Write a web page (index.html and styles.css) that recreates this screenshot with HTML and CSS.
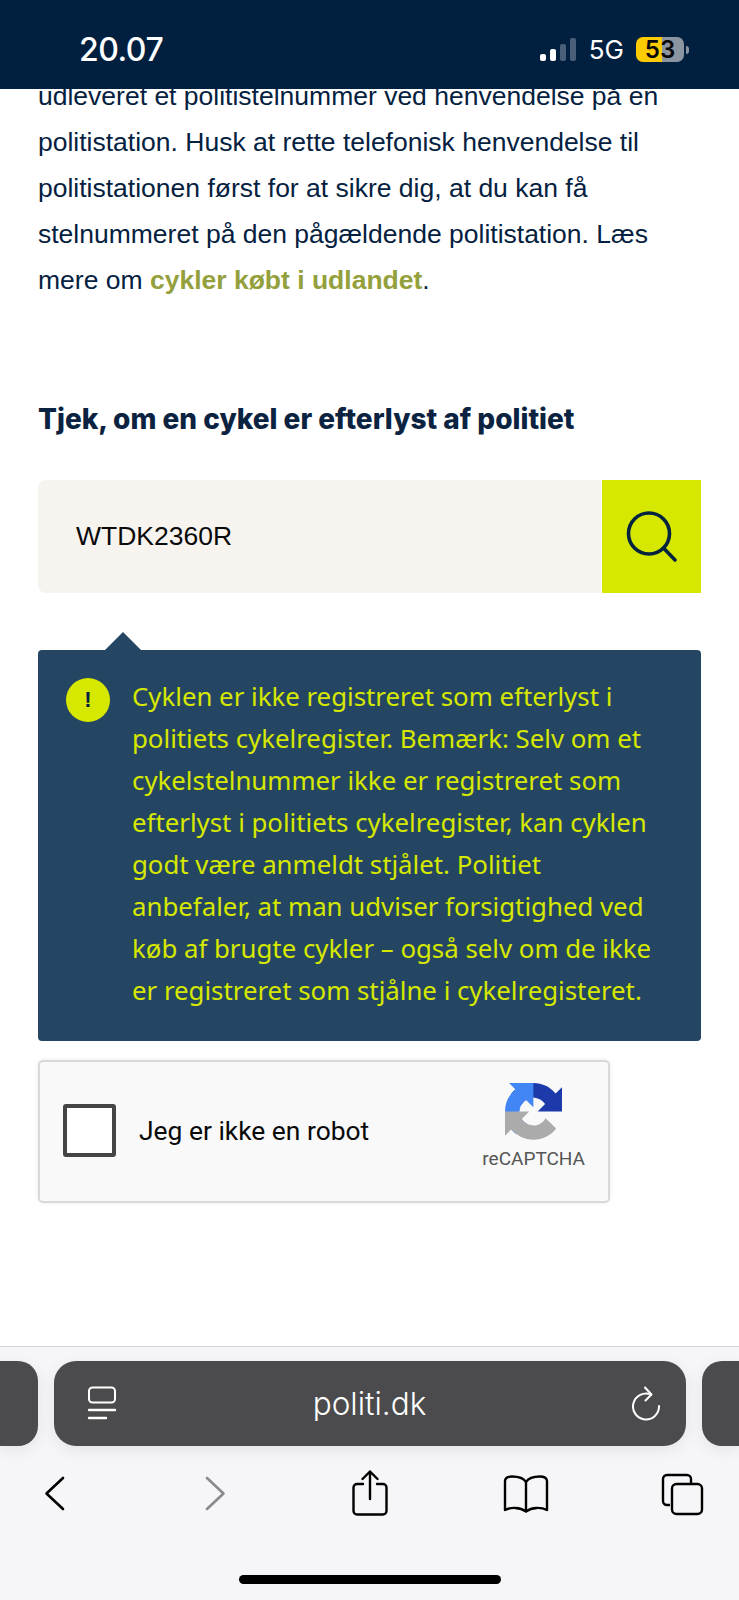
FILE: index.html
```html
<!DOCTYPE html>
<html lang="da">
<head>
    <meta charset="UTF-8">
    <title>Tjek cykel - politi.dk</title>
    <link rel="stylesheet" href="styles.css">
</head>
<body>
    <div class="status-bar">
        <div class="status-time">20.07</div>
        <div class="status-right">
            <div class="signal">
                <span class="bar bar-1"></span>
                <span class="bar bar-2"></span>
                <span class="bar bar-3"></span>
                <span class="bar bar-4"></span>
            </div>
            <div class="network">5G</div>
            <div class="battery"><span class="battery-level">53</span></div>
            <span class="battery-nub"></span>
        </div>
    </div>

    <main class="content">
        <p class="intro">udleveret et politistelnummer ved henvendelse på en politistation. Husk at rette telefonisk henvendelse til politistationen først for at sikre dig, at du kan få stelnummeret på den pågældende politistation. Læs mere om <a class="intro-link" href="#">cykler købt i udlandet</a>.</p>

        <h2 class="search-title">Tjek, om en cykel er efterlyst af politiet</h2>

        <div class="search-form">
            <div class="search-input">WTDK2360R</div>
            <div class="search-button">
                <svg width="56" height="56" viewBox="0 0 56 56" fill="none" stroke="#04233f" stroke-width="3.6" stroke-linecap="round">
                    <ellipse cx="25" cy="24.5" rx="20.5" ry="20.5"/>
                    <line x1="39.5" y1="39" x2="51" y2="51"/>
                </svg>
            </div>
        </div>

        <div class="result">
            <span class="result-arrow"></span>
            <div class="result-icon">!</div>
            <p class="result-text">Cyklen er ikke registreret som efterlyst i politiets cykelregister. Bemærk: Selv om et cykelstelnummer ikke er registreret som efterlyst i politiets cykelregister, kan cyklen godt være anmeldt stjålet. Politiet anbefaler, at man udviser forsigtighed ved køb af brugte cykler – også selv om de ikke er registreret som stjålne i cykelregisteret.</p>
        </div>

        <div class="captcha">
            <span class="captcha-box"></span>
            <span class="captcha-label">Jeg er ikke en robot</span>
            <div class="captcha-brand">
                <svg width="57" height="57" viewBox="0 0 64 64">
                    <path d="M64 31.955l-.033-1.37V4.687l-7.16 7.16C50.948 4.674 42.033.093 32.05.093c-10.4 0-19.622 4.96-25.458 12.64l11.736 11.86a15.55 15.55 0 0 1 4.754-5.334c2.05-1.6 4.952-2.906 8.968-2.906.485 0 .86.057 1.135.163 4.976.393 9.288 3.14 11.828 7.124l-8.307 8.307 26.2 0" fill="#1c3aa9"/>
                    <path d="M31.862.002l-1.37.033H4.594l7.16 7.16C4.58 13.054 0 21.97 0 31.953c0 10.4 4.96 19.622 12.64 25.458l11.86-11.736a15.55 15.55 0 0 1-5.334-4.754c-1.6-2.05-2.906-4.952-2.906-8.968 0-.485.057-.86.163-1.135.393-4.976 3.14-9.288 7.124-11.828l8.307 8.307V.002" fill="#4285f4"/>
                    <path d="M.001 31.953l.033 1.37v25.898l7.16-7.16c5.86 7.173 14.775 11.754 24.76 11.754 10.4 0 19.622-4.96 25.458-12.64l-11.86-11.736a15.55 15.55 0 0 1-4.754 5.334c-2.05 1.6-4.952 2.906-8.968 2.906-.485 0-.86-.057-1.135-.163-4.976-.393-9.288-3.14-11.828-7.124l8.307-8.307L0 31.953" fill="#ababab"/>
                </svg>
                <span class="captcha-name">reCAPTCHA</span>
            </div>
        </div>
    </main>

    <div class="browser-bar">
        <div class="tab-row">
            <div class="tab-stub"></div>
            <div class="address-pill">
                <svg class="pill-icon" width="30" height="36" viewBox="0 0 30 36" fill="none" stroke="#fff" stroke-linecap="round">
                    <rect x="2" y="1.5" width="26" height="15" rx="3.5" stroke-width="2"/>
                    <line x1="2" y1="24" x2="28" y2="24" stroke-width="2.4"/>
                    <line x1="2" y1="32" x2="19" y2="32" stroke-width="2.4"/>
                </svg>
                <span class="address-text">politi.dk</span>
                <svg class="pill-icon" width="30" height="36" viewBox="0 0 30 36" fill="none" stroke="#fff" stroke-width="2" stroke-linecap="round" stroke-linejoin="round">
                    <path d="M20 8.5 A13 13 0 1 0 28 20"/>
                    <path d="M14 1.5 L20.5 8.5 L14.5 14.5"/>
                </svg>
            </div>
            <div class="tab-stub"></div>
        </div>
        <div class="toolbar">
            <svg class="tool tool-back" width="21" height="35" viewBox="0 0 21 35" fill="none" stroke="#000" stroke-width="2.6" stroke-linecap="round" stroke-linejoin="round">
                <path d="M19 2 L2.5 17.5 L19 33"/>
            </svg>
            <svg class="tool tool-forward" width="21" height="35" viewBox="0 0 21 35" fill="none" stroke="#8a8a8c" stroke-width="2.6" stroke-linecap="round" stroke-linejoin="round">
                <path d="M2 2 L18.5 17.5 L2 33"/>
            </svg>
            <svg class="tool tool-share" width="36" height="46" viewBox="0 0 36 46" fill="none" stroke="#000" stroke-width="2.4" stroke-linecap="round" stroke-linejoin="round">
                <path d="M11 14 H5 a3.5 3.5 0 0 0 -3.5 3.5 V41 a3.5 3.5 0 0 0 3.5 3.5 H31 a3.5 3.5 0 0 0 3.5 -3.5 V17.5 a3.5 3.5 0 0 0 -3.5 -3.5 H25"/>
                <path d="M18 29 V2"/>
                <path d="M10.5 9 L18 1.5 L25.5 9"/>
            </svg>
            <svg class="tool tool-book" width="46" height="38" viewBox="0 0 46 38" fill="none" stroke="#000" stroke-width="2.4" stroke-linecap="round" stroke-linejoin="round">
                <path d="M23 7 C20 2 14 1.5 9 1.5 C5 1.5 2 3 2 6 V35 C8 32 17 32 23 36.5 C29 32 38 32 44 35 V6 C44 3 41 1.5 37 1.5 C32 1.5 26 2 23 7 Z"/>
                <path d="M23 7 V36"/>
            </svg>
            <svg class="tool tool-tabs" width="43" height="43" viewBox="0 0 43 43" fill="none" stroke="#000" stroke-width="2.4" stroke-linejoin="round">
                <path d="M9 32 H6 a4 4 0 0 1 -4 -4 V6 a4 4 0 0 1 4 -4 H26 a4 4 0 0 1 4 4 V11"/>
                <rect x="11" y="11" width="30" height="30" rx="4.5"/>
            </svg>
        </div>
        <div class="home-indicator"></div>
    </div>
</body>
</html>
```

FILE: styles.css
```css
* {
    box-sizing: border-box;
}
body {
    margin: 0;
    width: 739px;
    height: 1600px;
    overflow: hidden;
    position: relative;
    display: flex;
    flex-direction: column;
    background: white;
    font-family: "Liberation Sans", Arial, sans-serif;
    color: #04213f;
}

/* phone status bar, sits over the scrolled page */
.status-bar {
    position: absolute;
    top: 0;
    left: 0;
    right: 0;
    height: 89px;
    background-color: #011f3f;
    color: white;
    display: flex;
    justify-content: space-between;
    align-items: flex-start;
    padding: 32px 50px 0 79px;
    z-index: 1;
}
.status-time {
    font-family: Inter, sans-serif;
    font-size: 32px;
    font-weight: 500;
    line-height: 36px;
    letter-spacing: -0.5px;
}
.status-right {
    display: flex;
    align-items: center;
    height: 29px;
    margin-top: 3px;
}
.signal {
    display: flex;
    align-items: flex-end;
    gap: 4px;
    height: 23px;
    margin-right: 13px;
}
.bar {
    width: 6px;
    border-radius: 2px;
    background-color: white;
}
.bar-1 { height: 7px; }
.bar-2 { height: 12px; }
.bar-3 { height: 17px; background-color: #4a5f78; }
.bar-4 { height: 23px; background-color: #4a5f78; }
.network {
    font-family: Inter, sans-serif;
    font-size: 26px;
    margin-right: 12px;
}
.battery {
    width: 48px;
    height: 25px;
    border-radius: 7px;
    background: linear-gradient(to right, #fccb00 54%, #8b94a1 54%);
    display: flex;
    align-items: center;
    justify-content: center;
}
.battery-level {
    color: #0a0a0a;
    font-family: Inter, sans-serif;
    font-size: 24px;
    font-weight: 600;
}
.battery-nub {
    width: 3px;
    height: 8px;
    margin-left: 2px;
    border-radius: 0 3px 3px 0;
    background-color: #8b94a1;
}

.content {
    padding: 73px 38px 0;
    flex: 1;
}
.intro {
    margin: 0;
    font-size: 26.5px;
    line-height: 46px;
}
.intro-link {
    color: #94a03c;
    font-weight: bold;
    text-decoration: none;
}
.search-title {
    margin: 96px 0 0;
    font-family: Inter, sans-serif;
    font-size: 28px;
    font-weight: 800;
    line-height: 40px;
    color: #0b2341;
}
.search-form {
    display: flex;
    margin-top: 41px;
    height: 113px;
}
.search-input {
    flex: 1;
    background-color: #f7f3ee;
    border-radius: 8px 0 0 8px;
    padding-left: 38px;
    font-size: 26.5px;
    line-height: 113px;
    color: #0a0a0a;
}
.search-button {
    width: 99px;
    margin-left: 1px;
    background-color: #d6e800;
    display: flex;
    align-items: center;
    justify-content: center;
}

.result {
    position: relative;
    display: flex;
    gap: 22px;
    margin-top: 57px;
    padding: 25px 40px 30px 28px;
    background-color: #254662;
    border-radius: 4px;
}
.result-arrow {
    position: absolute;
    top: -18px;
    left: 67px;
    border-left: 18px solid transparent;
    border-right: 18px solid transparent;
    border-bottom: 18px solid #254662;
}
.result-icon {
    flex: none;
    width: 44px;
    height: 44px;
    margin-top: 3px;
    border-radius: 50%;
    background-color: #d6e800;
    color: #04213f;
    font-size: 22px;
    font-weight: bold;
    line-height: 44px;
    text-align: center;
}
.result-text {
    margin: 0;
    font-family: "Noto Sans", sans-serif;
    font-size: 25.8px;
    line-height: 42px;
    color: #d6e800;
}

.captcha {
    display: flex;
    align-items: center;
    width: 572px;
    height: 143px;
    margin-top: 19px;
    padding: 0 23px 2px 23px;
    background-color: #f9f9f9;
    border: 2px solid #d9d9d9;
    border-radius: 5px;
    box-shadow: 0 0 4px rgba(0, 0, 0, 0.08);
}
.captcha-box {
    width: 53px;
    height: 53px;
    background-color: white;
    border: 4px solid #454545;
    border-radius: 3px;
}
.captcha-label {
    margin-left: 23px;
    flex: 1;
    font-family: Roboto, sans-serif;
    font-size: 26.4px;
    color: #0a0a0a;
}
.captcha-brand {
    display: flex;
    flex-direction: column;
    align-items: center;
    gap: 8px;
    margin-top: -8px;
}
.captcha-name {
    font-family: Roboto, sans-serif;
    font-size: 19px;
    line-height: 22px;
    color: #555;
}

/* safari bottom bar */
.browser-bar {
    height: 254px;
    background-color: #f6f6f8;
    border-top: 1px solid #d8d8da;
    padding-top: 14px;
}
.tab-row {
    display: flex;
    gap: 16px;
    height: 85px;
}
.tab-stub {
    flex: 1;
    background-color: #4b4b4d;
    box-shadow: 0 4px 16px rgba(0, 0, 0, 0.08);
}
.tab-stub:first-child {
    border-radius: 0 20px 20px 0;
}
.tab-stub:last-child {
    border-radius: 20px 0 0 20px;
}
.address-pill {
    flex: none;
    width: 632px;
    display: flex;
    align-items: center;
    justify-content: space-between;
    padding: 0 25px 0 33px;
    background-color: #4b4b4d;
    border-radius: 22px;
    box-shadow: 0 4px 16px rgba(0, 0, 0, 0.08);
}
.address-text {
    margin-right: 8px;
    font-family: Inter, sans-serif;
    font-size: 31.5px;
    font-weight: 300;
    color: white;
}
.toolbar {
    position: relative;
    height: 100px;
}
.tool {
    position: absolute;
}
.tool-back { left: 44px; top: 30px; }
.tool-forward { left: 205px; top: 30px; }
.tool-share { left: 352px; top: 24px; }
.tool-book { left: 503px; top: 29px; }
.tool-tabs { left: 661px; top: 27px; }
.home-indicator {
    width: 262px;
    height: 9px;
    margin: 29px auto 0;
    border-radius: 5px;
    background-color: black;
}
```
